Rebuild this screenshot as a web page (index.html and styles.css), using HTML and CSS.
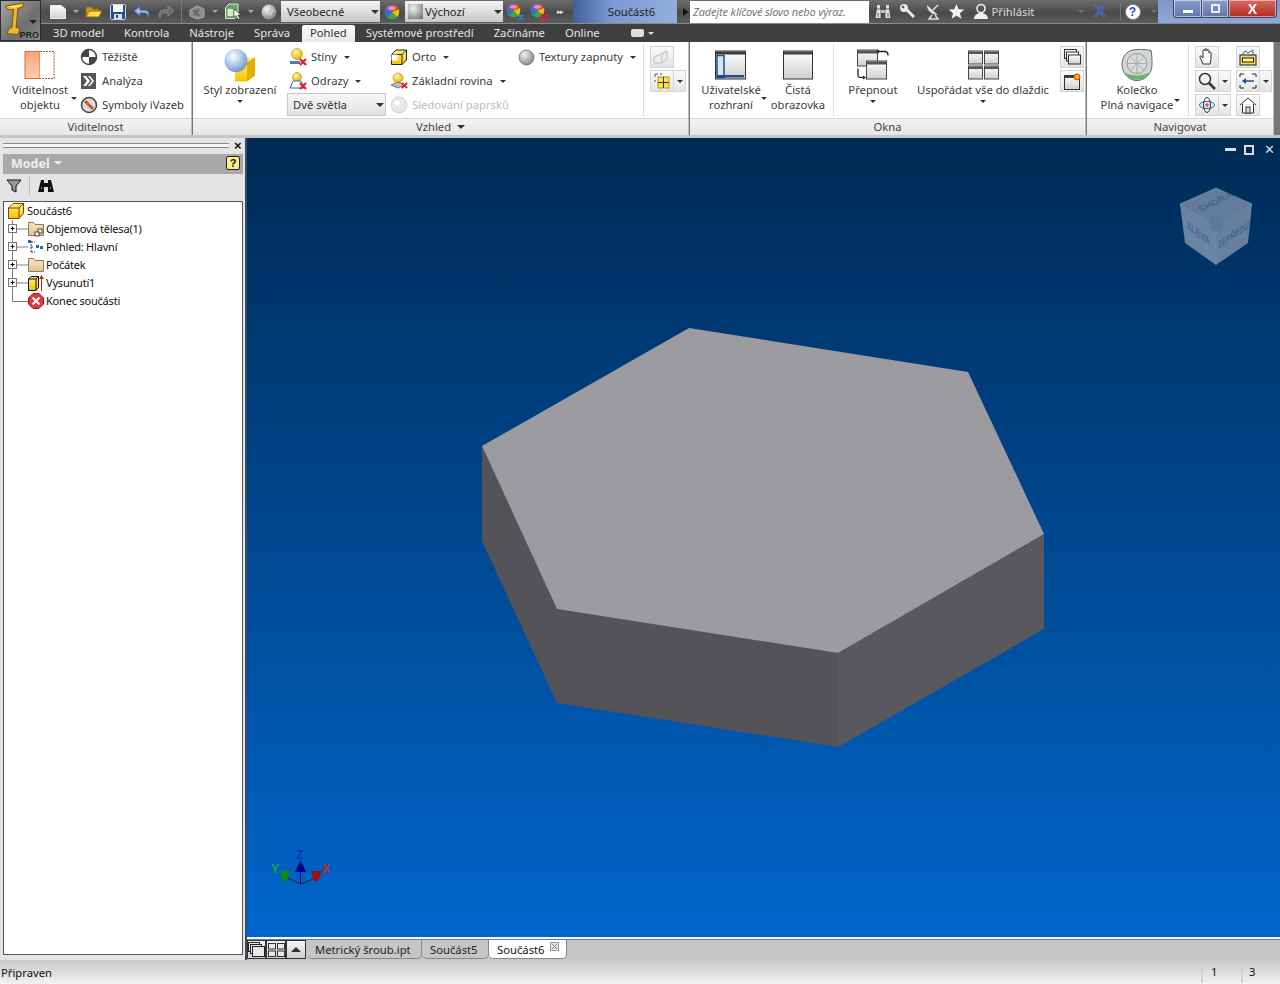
FILE: index.html
```html
<!DOCTYPE html>
<html lang="cs">
<head>
<meta charset="utf-8">
<title>Součást6</title>
<link rel="stylesheet" href="styles.css">
</head>
<body>
<svg class="defs" width="0" height="0" aria-hidden="true">
  <defs>
    <linearGradient id="gold" x1="0" y1="0" x2="0" y2="1"><stop offset="0" stop-color="#fff27a"/><stop offset="1" stop-color="#f4c400"/></linearGradient>
    <radialGradient id="ball" cx=".38" cy=".32" r=".75"><stop offset="0" stop-color="#ffffff"/><stop offset=".55" stop-color="#a9c2e4"/><stop offset="1" stop-color="#6f8fbd"/></radialGradient>
    <radialGradient id="goldball" cx=".38" cy=".32" r=".75"><stop offset="0" stop-color="#fff7b0"/><stop offset="1" stop-color="#e4ad00"/></radialGradient>
    <radialGradient id="greyball" cx=".35" cy=".3" r=".8"><stop offset="0" stop-color="#f2f2f2"/><stop offset="1" stop-color="#7c7c7c"/></radialGradient>
    <linearGradient id="orange" x1="0" y1="0" x2="0" y2="1"><stop offset="0" stop-color="#f4a678"/><stop offset="1" stop-color="#fbd0b0"/></linearGradient>
    <linearGradient id="pane" x1="0" y1="0" x2="0" y2="1"><stop offset="0" stop-color="#ffffff"/><stop offset="1" stop-color="#cfcfcf"/></linearGradient>
    <linearGradient id="folder" x1="0" y1="0" x2="0" y2="1"><stop offset="0" stop-color="#f7e4bf"/><stop offset="1" stop-color="#e2c48f"/></linearGradient>
    <symbol id="wheel" viewBox="0 0 16 16"><circle cx="8" cy="8" r="7.500" fill="#777"/><path d="M8 8V1a7 7 0 0 1 6.600 4.600z" fill="#e63b2e"/><path d="M8 8l6.600-2.400A7 7 0 0 1 13 13z" fill="#f2c200"/><path d="M8 8l5 5a7 7 0 0 1-9.500.4z" fill="#39a845"/><path d="M8 8l-4.500 5.400A7 7 0 0 1 1.200 6z" fill="#2f6fd0"/><path d="M8 8L1.200 6A7 7 0 0 1 8 1z" fill="#8a4fc0"/><ellipse cx="8" cy="4" rx="4" ry="2" fill="#fff" opacity=".45"/></symbol>
    <symbol id="xred" viewBox="0 0 8 8"><path d="M1 1l6 6M7 1L1 7" stroke="#d8202a" stroke-width="2.200"/></symbol>
    <symbol id="node" viewBox="0 0 24 18"><path d="M8.500 0V18M8.500 9H24" stroke="#808080" fill="none"/><rect x="4.500" y="4.500" width="8" height="8" fill="#fff" stroke="#777"/><path d="M6.500 8.500h4M8.500 6.500v4" stroke="#000"/></symbol>
    <symbol id="nodelast" viewBox="0 0 24 18"><path d="M8.500 0V9.500H24" stroke="#808080" fill="none"/></symbol>
  </defs>
</svg>

<div class="app">
  <header class="head">
    <div class="logo"><svg class="logo-i" width="30" height="36" viewBox="0 0 30 36" aria-hidden="true"><path d="M3 5L22 2l-1 4-5 1.500-2 19 4 1-2 6-11-1 2-5 3-1 1.500-18-5 .5z" fill="#eeb92c" stroke="#7a5508"/><path d="M6 5.500L20 3.500 15 6l-4 1z" fill="#ffe68a"/></svg><span class="logo-caret"></span><span class="logo-pro">PRO</span></div>
    <div class="head-rows">
      <div class="qat">
        <span class="q"><svg width="18" height="16" viewBox="0 0 18 16"><path d="M1.500 1.500H12L16.500 5V14.500H1.500z" fill="url(#pane)" stroke="#eee"/></svg></span>
        <span class="qc"></span>
        <span class="q"><svg width="18" height="16" viewBox="0 0 18 16"><path d="M1 13V3h6l1 2h6v2" fill="#c99a1c" stroke="#8a6a10"/><path d="M1 13L4 7h13l-3 6z" fill="#ffd94a" stroke="#8a6a10"/></svg></span>
        <span class="q"><svg width="16" height="16" viewBox="0 0 16 16"><rect x=".5" y=".5" width="15" height="15" rx="1" fill="#25508f" stroke="#c6d4ea"/><rect x="3" y="1" width="10" height="7" fill="#fff"/><rect x="4" y="10" width="8" height="5" fill="#dde"/><rect x="6" y="11" width="2" height="3" fill="#25508f"/></svg></span>
        <span class="q"><svg width="18" height="14" viewBox="0 0 18 14"><path d="M7 1L1 6l6 5V8h4c3 0 4 2 4 5 2-4 1-8-4-8H7z" fill="#9dbbe4" stroke="#3d6ba8"/></svg></span>
        <span class="q"><svg width="18" height="14" viewBox="0 0 18 14"><path d="M11 1l6 5-6 5V8H7c-3 0-4 2-4 5-2-4-1-8 4-8h4z" fill="#6c6c6c" stroke="#8c8c8c"/></svg></span>
        <span class="qsep"></span>
        <span class="q"><svg width="18" height="16" viewBox="0 0 18 16"><path d="M2 6l7-4 7 3v8l-7 2-7-3z" fill="#8d8d8d" stroke="#a8a8a8"/><path d="M5 6l6 6M11 5L6 11" stroke="#666" stroke-width="2"/></svg></span>
        <span class="qc"></span>
        <span class="q"><svg width="18" height="17" viewBox="0 0 18 17"><path d="M1.500 4.500L5 1h9v11l-3 3.500H1.500z" fill="#5fa95f" stroke="#e3e3e3"/><rect x="3.500" y="6" width="6" height="7" fill="#d9e8d2"/><path d="M10 6l7 6h-3l2 4-2 .5-2-4-2 2z" fill="#fff" stroke="#222" stroke-width=".6"/></svg></span>
        <span class="qc"></span>
        <span class="q"><svg width="16" height="16" viewBox="0 0 16 16"><circle cx="8" cy="8" r="7.500" fill="url(#greyball)"/><path d="M4 6h1M8 4h1M11 7h1M6 10h1M9 11h1M5 8h1M10 9h1" stroke="#fff"/></svg></span>
        <div class="combo combo-a"><span>Všeobecné</span><i class="tri"></i></div>
        <span class="qw"><svg width="16" height="16"><use href="#wheel"/></svg></span>
        <div class="combo combo-b"><svg width="15" height="15" viewBox="0 0 15 15"><rect width="15" height="15" fill="url(#greyball)"/></svg><span>Výchozí</span><i class="tri"></i></div>
        <span class="qw2"><svg width="18" height="18" viewBox="0 0 18 18"><use href="#wheel" width="15" height="15"/><path d="M11 12h7l-3.500 3z" fill="#2a8fe0"/><path d="M11 16h7" stroke="#2a8fe0"/></svg></span>
        <span class="qw2"><svg width="18" height="18" viewBox="0 0 18 18"><use href="#wheel" width="15" height="15"/><use href="#xred" x="10" y="10" width="8" height="8"/></svg></span>
        <span class="more">▸▸</span>
        <div class="doc-title">Součást6</div>
        <span class="play"></span>
        <div class="search">Zadejte klíčové slovo nebo výraz.</div>
        <div class="tools">
          <span class="t"><svg width="18" height="16" viewBox="0 0 18 16"><path d="M3 1h3v5H3zM12 1h3v5h-3z" fill="#ddd"/><path d="M2.500 5h4.500v9.500H1zM11 5h4.500l1.500 9.500h-6z" fill="#e5e5e5" stroke="#333" stroke-width=".7"/><rect x="7" y="6" width="4" height="3" fill="#bbb"/><path d="M3 9h2v4H3zM13 9h2v4h-2z" fill="#999"/></svg></span>
          <span class="t"><svg width="17" height="17" viewBox="0 0 17 17"><path d="M6 5l9 9" stroke="#e8e8e8" stroke-width="3"/><circle cx="5" cy="5" r="4" fill="#e8e8e8"/><circle cx="4" cy="4" r="1.300" fill="#555"/></svg></span>
          <span class="t"><svg width="17" height="17" viewBox="0 0 17 17"><path d="M3 2c0 6 5 10 11 10z" fill="#e0e0e0"/><path d="M9 7l5-5M8 12l-3 4h9l-3-4" stroke="#e0e0e0" fill="none" stroke-width="1.500"/></svg></span>
          <span class="t"><svg width="17" height="17" viewBox="0 0 17 17"><path d="M8.500 1l2.200 5.200 5.600.4-4.300 3.600 1.400 5.500-4.900-3-4.900 3 1.400-5.500L.7 6.600l5.600-.4z" fill="#f0f0f0"/></svg></span>
          <span class="t"><svg width="18" height="17" viewBox="0 0 18 17"><circle cx="9" cy="5.500" r="4" fill="none" stroke="#eee" stroke-width="1.600"/><path d="M2 16c0-4 3-5 5-6h4c2 1 5 2 5 6z" fill="#eee"/></svg></span>
          <span class="login">Přihlásit</span>
          <i class="tri tri-d"></i>
          <span class="xx">X</span>
          <span class="tsep"></span>
          <span class="help">?</span>
          <i class="tri tri-d"></i>
        </div>
        <div class="winctl">
          <div class="wc wc-min"><span></span></div>
          <div class="wc wc-max"><span></span></div>
          <div class="wc wc-x">X</div>
        </div>
      </div>
      <nav class="tabs">
        <span class="tab">3D model</span>
        <span class="tab">Kontrola</span>
        <span class="tab">Nástroje</span>
        <span class="tab">Správa</span>
        <span class="tab tab-on">Pohled</span>
        <span class="tab">Systémové prostředí</span>
        <span class="tab">Začínáme</span>
        <span class="tab">Online</span>
        <span class="tab-cam"><i></i><b class="tri tri-w"></b></span>
      </nav>
    </div>
  </header>

  <section class="ribbon">
    <div class="panel p1">
      <div class="pbody">
        <div class="big b-vid">
          <svg class="bico" width="32" height="30" viewBox="0 0 32 30"><rect x="1" y="1" width="15" height="27" fill="url(#orange)" stroke="#e06a28"/><path d="M16 1h14v27H16" fill="#fff" stroke="#a0532a" stroke-dasharray="2 1"/></svg>
          <span class="blabel">Viditelnost<br>objektu</span><i class="tri side side-vid"></i>
        </div>
        <div class="col c-vid">
          <div class="sr"><svg width="18" height="18" viewBox="0 0 18 18"><circle cx="9" cy="9" r="7.500" fill="#fff" stroke="#444" stroke-width="1.500"/><path d="M9 9V1.500A7.500 7.500 0 0 0 1.500 9zM9 9v7.500A7.500 7.500 0 0 0 16.500 9z" fill="#444"/></svg><span>Těžiště</span></div>
          <div class="sr"><svg width="18" height="18" viewBox="0 0 18 18"><rect x="1" y="1" width="15" height="16" fill="#555"/><path d="M3 4h3l4 5-4 5H3l4-5zM8 4h2l4 5-4 5H8l4-5z" fill="#fff"/></svg><span>Analýza</span></div>
          <div class="sr"><svg width="18" height="18" viewBox="0 0 18 18"><circle cx="9" cy="9" r="7.500" fill="#ddd" stroke="#444" stroke-width="1.500"/><path d="M5 5l8 8" stroke="#d5502a" stroke-width="3"/></svg><span>Symboly iVazeb</span></div>
        </div>
      </div>
      <div class="pfoot">Viditelnost</div>
    </div>

    <div class="panel p2">
      <div class="pbody">
        <div class="big b-styl">
          <svg class="bico" width="34" height="34" viewBox="0 0 34 34"><path d="M12 14l10-5h10v18l-8 6H12z" fill="url(#gold)"/><path d="M24 14l8-5v18l-8 6z" fill="#e0ad00"/><circle cx="13" cy="12" r="11.500" fill="url(#ball)"/></svg>
          <span class="blabel">Styl zobrazení</span><i class="tri under"></i>
        </div>
        <div class="col c-sti">
          <div class="sr"><svg width="18" height="18" viewBox="0 0 18 18"><circle cx="8" cy="6" r="5.500" fill="url(#goldball)" stroke="#b98a00" stroke-width=".6"/><path d="M1 13h10v3H1z" fill="#5578a8"/><use href="#xred" x="10" y="10" width="8" height="8"/></svg><span>Stíny</span><i class="tri tri-s"></i></div>
          <div class="sr"><svg width="18" height="18" viewBox="0 0 18 18"><circle cx="8" cy="5" r="4.500" fill="url(#goldball)" stroke="#b98a00" stroke-width=".6"/><path d="M4 9h8l3 7H1z" fill="#fff" stroke="#466a9a"/><use href="#xred" x="10" y="10" width="8" height="8"/></svg><span>Odrazy</span><i class="tri tri-s"></i></div>
          <div class="lightbox"><span>Dvě světla</span><i class="tri"></i></div>
        </div>
        <div class="col c-ort">
          <div class="sr"><svg width="18" height="18" viewBox="0 0 18 18"><path d="M1.500 6.500L6 2h10.500v10L12 16.500H1.500z" fill="url(#gold)" stroke="#222"/><path d="M1.500 6.500H12v10M12 6.500L16.500 2" fill="none" stroke="#222"/><rect x="1.500" y="6.500" width="6" height="6" fill="#fff"/></svg><span>Orto</span><i class="tri tri-s"></i></div>
          <div class="sr"><svg width="18" height="18" viewBox="0 0 18 18"><circle cx="8" cy="6" r="5" fill="url(#goldball)" stroke="#b98a00" stroke-width=".6"/><path d="M1 13l7-3 7 3-7 3z" fill="#bbb" stroke="#777"/><use href="#xred" x="11" y="10" width="7" height="7"/></svg><span>Základní rovina</span><i class="tri tri-s"></i></div>
          <div class="sr sr-off"><svg width="18" height="18" viewBox="0 0 18 18"><circle cx="9" cy="9" r="8" fill="#e8e8e8" stroke="#d2d2d2"/><circle cx="7" cy="7" r="3" fill="#fbfbfb"/></svg><span>Sledování paprsků</span></div>
        </div>
        <div class="col c-tex">
          <div class="sr"><svg width="17" height="17" viewBox="0 0 17 17"><circle cx="8.500" cy="8.500" r="7.500" fill="url(#greyball)" stroke="#666" stroke-width=".7"/></svg><span>Textury zapnuty</span><i class="tri tri-s"></i></div>
        </div>
        <div class="psep psep-v"></div>
        <div class="col c-mini">
          <div class="ibtn off"><svg width="18" height="16" viewBox="0 0 18 16"><path d="M1 8l5-2 8-4v8l-5 4H1z" fill="#ececec" stroke="#bcbcbc"/><path d="M9 14V6l5-4" fill="none" stroke="#bcbcbc"/></svg></div>
          <div class="ibtn split"><span class="ib-main"><svg width="16" height="16" viewBox="0 0 16 16"><rect x="4" y="4" width="11" height="11" fill="#ffe14a" stroke="#c39b00"/><path d="M9.500 4v11M4 9.500h11" stroke="#333"/><path d="M1 4V1h3M1 7v2M6 1h2" stroke="#1c62c8" fill="none"/></svg></span><span class="ib-arr"><i class="tri tri-k"></i></span></div>
        </div>
      </div>
      <div class="pfoot">Vzhled <i class="tri tri-foot"></i></div>
    </div>

    <div class="panel p3">
      <div class="pbody">
        <div class="big b-uziv">
          <svg class="bico" width="32" height="30" viewBox="0 0 32 30"><rect x=".5" y=".5" width="30" height="28" fill="url(#pane)" stroke="#333"/><rect x="1" y="1" width="29" height="3" fill="#3a3a3a"/><rect x="2" y="5" width="7" height="22" fill="#d8e6f4" stroke="#1c4f86" stroke-width="1.500"/><rect x="2" y="24.500" width="27" height="2.500" fill="#1c4f86"/></svg>
          <span class="blabel">Uživatelské<br>rozhraní</span><i class="tri side side-uziv"></i>
        </div>
        <div class="big b-cist">
          <svg class="bico" width="30" height="30" viewBox="0 0 30 30"><rect x=".5" y=".5" width="29" height="28" fill="url(#pane)" stroke="#333"/><rect x="1" y="1" width="28" height="3" fill="#444"/></svg>
          <span class="blabel">Čistá<br>obrazovka</span>
        </div>
        <div class="psep psep-o"></div>
        <div class="big b-prep">
          <svg class="bico" width="32" height="32" viewBox="0 0 32 32"><rect x=".5" y=".5" width="20" height="16" fill="url(#pane)" stroke="#444"/><rect x="1" y="1" width="19" height="3" fill="#555"/><rect x="9.500" y="11.500" width="20" height="18" fill="url(#pane)" stroke="#444"/><rect x="10" y="12" width="19" height="3" fill="#555"/><path d="M22 2h6c2 0 3 1 3 4M1 19v7c0 2 1 2 5 2" fill="none" stroke="#222" stroke-width="1.300"/><path d="M22 0v4l-3-2zM6 26v4l3-2z" fill="#222"/></svg>
          <span class="blabel">Přepnout</span><i class="tri under"></i>
        </div>
        <div class="big b-uspo">
          <svg class="bico" width="31" height="30" viewBox="0 0 31 30"><g fill="url(#pane)" stroke="#444"><rect x=".5" y=".5" width="14" height="13"/><rect x="16.500" y=".5" width="14" height="13"/><rect x=".5" y="15.500" width="14" height="13"/><rect x="16.500" y="15.500" width="14" height="13"/></g><g fill="#555"><rect x="1" y="1" width="13" height="2.500"/><rect x="17" y="1" width="13" height="2.500"/><rect x="1" y="16" width="13" height="2.500"/><rect x="17" y="16" width="13" height="2.500"/></g></svg>
          <span class="blabel">Uspořádat vše do dlaždic</span><i class="tri under"></i>
        </div>
        <div class="col c-mini c-okna">
          <div class="ibtn"><svg width="17" height="16" viewBox="0 0 17 16"><g fill="url(#pane)" stroke="#333"><rect x=".5" y=".5" width="12" height="9"/><rect x="2.500" y="3" width="12" height="9"/><rect x="4.500" y="6" width="12" height="9"/></g></svg></div>
          <div class="ibtn"><svg width="17" height="17" viewBox="0 0 17 17"><rect x=".5" y="2.500" width="15" height="14" fill="url(#pane)" stroke="#333"/><rect x="1" y="3" width="14" height="2" fill="#444"/><circle cx="13" cy="4" r="3" fill="#f7b500" stroke="#e23b10"/></svg></div>
        </div>
      </div>
      <div class="pfoot">Okna</div>
    </div>

    <div class="panel p4">
      <div class="pbody">
        <div class="big b-kol">
          <svg class="bico" width="32" height="34" viewBox="0 0 32 34"><path d="M16 1c5 0 9 0 14 1 1 5 1 9 1 14 0 9-7 16-15 16S1 25 1 16 7 1 16 1z" fill="#d0d8d0" stroke="#666"/><circle cx="16" cy="15" r="10" fill="#d8dcdc" stroke="#999"/><path d="M16 5v20M6 15h20M9 8l14 14M23 8L9 22" stroke="#aaa"/><path d="M4 24c6 4 18 4 24 0l-3 5c-5 3-13 3-18 0z" fill="#66b56c"/></svg>
          <span class="blabel">Kolečko<br>Plná navigace</span><i class="tri side side-kol"></i>
        </div>
        <div class="psep psep-n"></div>
        <div class="col c-nav1">
          <div class="ibtn"><svg width="18" height="18" viewBox="0 0 18 18"><path d="M5 16L2 9c0-2 2-1 3 1V3c0-2 2-2 2 0V2c0-2 2-2 2 0v1c0-2 2-2 2 0v2c0-2 2-1 2 0v6l-1 5z" fill="#fff" stroke="#333"/></svg></div>
          <div class="ibtn split"><span class="ib-main"><svg width="18" height="18" viewBox="0 0 18 18"><circle cx="7" cy="7" r="5.500" fill="#f4f4f4" stroke="#333" stroke-width="1.500"/><path d="M11 11l6 6" stroke="#333" stroke-width="2.500"/></svg></span><span class="ib-arr"><i class="tri tri-k"></i></span></div>
          <div class="ibtn split"><span class="ib-main"><svg width="18" height="18" viewBox="0 0 18 18"><ellipse cx="9" cy="9" rx="7.500" ry="3.500" fill="none" stroke="#1c62c8"/><ellipse cx="9" cy="9" rx="3.500" ry="7.500" fill="none" stroke="#333"/><path d="M7 9h4M9 7v4" stroke="#e01c1c"/></svg></span><span class="ib-arr"><i class="tri tri-k"></i></span></div>
        </div>
        <div class="col c-nav2">
          <div class="ibtn"><svg width="18" height="17" viewBox="0 0 18 17"><rect x="1" y="6" width="16" height="10" fill="#ffd93a" stroke="#1d1d1d"/><rect x="3.500" y="9" width="11" height="4" fill="#fff3b0" stroke="#1d1d1d"/><path d="M3 6l3-4 3 2 5-3v5" fill="none" stroke="#1c62c8"/></svg></div>
          <div class="ibtn split"><span class="ib-main"><svg width="18" height="16" viewBox="0 0 18 16"><path d="M1 4V1h4M13 1h4v3M1 12v3h4M13 15h4v-3" fill="none" stroke="#222"/><path d="M15 8H5" stroke="#1c4f86" stroke-width="1.500"/><path d="M7 5L3 8l4 3z" fill="#1c4f86"/></svg></span><span class="ib-arr"><i class="tri tri-k"></i></span></div>
          <div class="ibtn"><svg width="18" height="18" viewBox="0 0 18 18"><path d="M1 9l8-7 8 7M3.500 8v9h11V8" fill="#fff" stroke="#333"/><rect x="7" y="11" width="4" height="6" fill="#ddd" stroke="#333"/></svg></div>
        </div>
      </div>
      <div class="pfoot">Navigovat</div>
    </div>
  </section>

  <main class="main">
    <aside class="browser">
      <div class="grip"><span class="grip-line"></span><span class="grip-x">×</span></div>
      <div class="bhead"><span class="bhead-t">Model</span><i class="tri tri-wh"></i><span class="bhelp">?</span></div>
      <div class="btools">
        <svg width="16" height="14" viewBox="0 0 16 14"><path d="M1 1h14L10 7v6L6 11V7z" fill="#9a9a9a" stroke="#111"/></svg>
        <span class="btsep"></span>
        <svg width="16" height="14" viewBox="0 0 16 14"><path d="M3 1h3v12H0zM10 1h3l3 12h-6z" fill="#111"/><rect x="6" y="4" width="4" height="4" fill="#111"/><path d="M3 9h1M12 9h1" stroke="#fff"/></svg>
      </div>
      <div class="tree">
        <div class="row row-root"><svg width="16" height="16" viewBox="0 0 16 16"><path d="M.5 5L5 .5h10.500v10L11 15.500H.5z" fill="url(#gold)" stroke="#8a3b10"/><path d="M.5 5H11v10.500M11 5l4.500-4.500" fill="none" stroke="#8a3b10"/></svg><span>Součást6</span></div>
        <div class="row"><svg class="cn" width="24" height="18"><use href="#node"/></svg><svg width="16" height="16" viewBox="0 0 16 16"><path d="M.5 14.500V1.500h5l1.500 2h8.500v11z" fill="url(#folder)" stroke="#8c7a5a"/><rect x="10" y="8" width="4" height="4" fill="#fff" stroke="#444"/><rect x="7" y="11" width="4" height="4" fill="#fff" stroke="#444"/></svg><span>Objemová tělesa(1)</span></div>
        <div class="row"><svg class="cn" width="24" height="18"><use href="#node"/></svg><svg width="16" height="16" viewBox="0 0 16 16"><path d="M3 2v12M3 3h4M3 8h3M3 13h4M9 8h6" stroke="#333" fill="none" stroke-dasharray="2 1"/><rect x="0" y="1" width="3" height="3" fill="#2c6aa8"/><rect x="8" y="6" width="3" height="3" fill="#2c6aa8"/><rect x="12" y="7" width="3" height="3" fill="#2c6aa8"/></svg><span>Pohled: Hlavní</span></div>
        <div class="row"><svg class="cn" width="24" height="18"><use href="#node"/></svg><svg width="16" height="16" viewBox="0 0 16 16"><path d="M.5 14.500V1.500h5l1.500 2h8.500v11z" fill="url(#folder)" stroke="#8c7a5a"/></svg><span>Počátek</span></div>
        <div class="row"><svg class="cn" width="24" height="18"><use href="#node"/></svg><svg width="16" height="16" viewBox="0 0 16 16"><path d="M.5 4L3 1.500h7.500v11L8 15.500H.5z" fill="url(#gold)" stroke="#111"/><path d="M.5 4H8v11.500M8 4l2.500-2.500" fill="none" stroke="#111"/><path d="M13.500 16V3" stroke="#e01010"/><path d="M13.500 0l2.500 4h-5z" fill="#e01010"/></svg><span>Vysunutí1</span></div>
        <div class="row"><svg class="cn" width="24" height="18"><use href="#nodelast"/></svg><svg width="16" height="16" viewBox="0 0 16 16"><path d="M5 .5h6L15.500 5v6L11 15.500H5L.5 11V5z" fill="#e8343a" stroke="#8c2020"/><path d="M4.500 4.500l7 7M11.500 4.500l-7 7" stroke="#fff" stroke-width="2.200"/></svg><span>Konec součásti</span></div>
      </div>
    </aside>

    <div class="work">
      <div class="viewport">
        <div class="vp-ctl">
          <span class="vc-min"></span>
          <span class="vc-max"></span>
          <span class="vc-x">✕</span>
        </div>
        <svg class="model" width="1033" height="799" viewBox="247 138 1033 799">
          <polygon points="482,446 557,609 557,703 482,541" fill="#545358"/>
          <polygon points="557,609 838,653 838,747 557,703" fill="#545358"/>
          <polygon points="838,653 1044,534 1044,629 838,747" fill="#59585d"/>
          <polygon points="689,328 968,372 1044,534 838,653 557,609 482,446" fill="#9c9b9f"/>
          <g class="cube">
            <polygon points="1216,188 1252,204 1216,226 1180,204" fill="#637c9c"/>
            <polygon points="1180,204 1216,226 1216,265 1185,243" fill="#6a83a2"/>
            <polygon points="1252,204 1216,226 1216,265 1248,243" fill="#6880a0"/>
            <path d="M1180 204L1216 188 1252 204 1216 226zM1216 226V265" fill="none" stroke="#7f8b9c" stroke-width=".7"/>
            <polygon points="1209,219 1216,216 1223,220 1222,229 1215,232 1209,228" fill="#5d7899"/>
            <text class="cube-t" transform="matrix(.88 -.42 .62 .62 1201 212)">SHORA</text>
            <text class="cube-t" transform="matrix(.68 .52 0 1.050 1187 228)">ZLEVA</text>
            <text class="cube-t" transform="matrix(.62 -.42 0 1.050 1218 249)">ZEPŘEDU</text>
          </g>
          <g class="triad">
            <path d="M301 884l-20-9M301 884l19-8" stroke="#222" fill="none"/>
            <path d="M300.500 884v-14" stroke="#00008a"/>
            <polygon points="300.500,860 306,872 295,872" fill="#00008a"/>
            <polygon points="279,871 290,871 287,881 283,881" fill="#0a8a12"/>
            <polygon points="311,871 322,871 318,881 314,881" fill="#9c0f14"/>
            <text x="296" y="859" class="t-z">Z</text>
            <text x="271" y="873" class="t-y">Y</text>
            <text x="322" y="873" class="t-x">X</text>
          </g>
        </svg>
      </div>
      <div class="doctabs">
        <span class="dbtn"><svg width="17" height="15" viewBox="0 0 17 15"><g fill="#e8e8e8" stroke="#222"><rect x=".5" y=".5" width="11" height="9"/><rect x="2.500" y="2.500" width="11" height="9"/><rect x="4.500" y="4.500" width="12" height="10"/></g></svg></span>
        <span class="dbtn"><svg width="17" height="14" viewBox="0 0 17 14"><g fill="#e8e8e8" stroke="#333"><rect x=".5" y=".5" width="7" height="5.500"/><rect x="9.500" y=".5" width="7" height="5.500"/><rect x=".5" y="8" width="7" height="5.500"/><rect x="9.500" y="8" width="7" height="5.500"/></g></svg></span>
        <span class="dbtn dbtn-up"><i></i></span>
        <span class="dtab d1">Metrický šroub.ipt</span>
        <span class="dtab d2">Součást5</span>
        <span class="dtab d3">Součást6<svg width="9" height="9" viewBox="0 0 9 9"><rect x=".5" y=".5" width="8" height="8" fill="#e4e4e4" stroke="#999"/><path d="M2 2l5 5M7 2L2 7" stroke="#888"/></svg></span>
      </div>
    </div>
  </main>

  <footer class="status">
    <span class="st-text">Připraven</span>
    <span class="st-cell st-1">1</span>
    <span class="st-cell st-2">3</span>
  </footer>
</div>
</body>
</html>
```

FILE: styles.css
```css
* { box-sizing: border-box; }
html, body { margin: 0; padding: 0; }
body { width: 1280px; height: 984px; overflow: hidden; background: #444; font-family: "Noto Sans", "Open Sans", sans-serif; font-size: 11.25px; color: #3c3c3c; }
.defs { position: absolute; }
svg { display: block; flex: none; }
i { display: block; font-style: normal; }

.app { width: 1280px; height: 984px; display: flex; flex-direction: column; }

/* carets */
.tri { width: 0; height: 0; border-left: 4px solid transparent; border-right: 4px solid transparent; border-top: 4px solid #333; flex: none; }
.tri-s { border-left-width: 3px; border-right-width: 3px; border-top-width: 3px; margin-left: 3px; }
.tri-k { border-left-width: 3px; border-right-width: 3px; border-top-width: 3px; }
.tri-d { border-left-width: 3px; border-right-width: 3px; border-top-width: 3px; border-top-color: #777; }
.tri-w { border-left-width: 3px; border-right-width: 3px; border-top-width: 3px; border-top-color: #ddd; }
.tri-wh { border-top-color: #eee; margin-left: 4px; }
.tri-foot { margin-left: 6px; }

/* header */
.head { display: flex; height: 42px; flex: none; }
.logo { width: 41px; height: 41px; position: relative; background: linear-gradient(135deg, #a8a8a8, #6e6e6e 60%, #8a8a8a); border: 1px solid #2c2c2c; }
.logo-i { position: absolute; left: 1px; top: 0; }
.logo-caret { position: absolute; right: 3px; top: 19px; border-left: 4px solid transparent; border-right: 4px solid transparent; border-top: 4px solid #222; }
.logo-pro { position: absolute; right: 1px; bottom: 0; font: bold 9px "Liberation Sans", sans-serif; color: #222; }
.head-rows { width: 1239px; display: flex; flex-direction: column; }
.qat { height: 24px; display: flex; align-items: center; background: linear-gradient(#6d6d6d, #4a4a4a 55%, #5c5c5c); border-bottom: 1px solid #8a8a8a; }
.q { width: 24px; height: 23px; display: flex; align-items: center; justify-content: center; flex: none; }
.qc { width: 12px; flex: none; display: flex; justify-content: center; }
.qc::after { content: ""; border-left: 3px solid transparent; border-right: 3px solid transparent; border-top: 3px solid #aaa; }
.qat > .q:first-child { margin-left: 5px; }
.qsep { width: 7px; height: 23px; flex: none; position: relative; }
.qsep::after { content: ""; position: absolute; left: 3px; top: 0; bottom: 0; width: 1px; background: #7a7a7a; }
.combo { height: 21px; display: flex; align-items: center; background: linear-gradient(#f4f4f4, #c8c8c8); color: #222; flex: none; }
.combo .tri { margin-left: auto; margin-right: 1px; }
.combo-a { width: 99px; padding-left: 6px; }
.combo-b { width: 98px; padding-left: 3px; gap: 2px; margin-left: 1px; }
.qw { width: 24px; display: flex; justify-content: center; flex: none; }
.qw2 { width: 24px; display: flex; justify-content: center; flex: none; }
.more { width: 10px; color: #eee; font-size: 7px; letter-spacing: -1px; margin-left: 6px; flex: none; }
.doc-title { width: 104px; height: 23px; margin-left: 6px; text-align: center; line-height: 23px; color: #222; flex: none; padding-left: 13px; background: linear-gradient(90deg, #3f5d9a, #7a98d0 35%, #93aede); }
.play { width: 0; height: 0; margin: 0 2px 0 6px; border-top: 4px solid transparent; border-bottom: 4px solid transparent; border-left: 5px solid #111; flex: none; }
.search { width: 179px; height: 22px; line-height: 22px; background: #fff; color: #777; font-style: italic; font-size: 11px; padding-left: 3px; white-space: nowrap; overflow: hidden; flex: none; letter-spacing: -.15px; }
.tools { width: 289px; height: 23px; display: flex; align-items: center; padding-left: 2px; flex: none; }
.t { width: 24.5px; display: flex; justify-content: center; flex: none; }
.login { color: #ddd; margin-left: -2px; width: 86px; }
.xx { color: #3a5fa8; font: bold 17px "Liberation Sans", sans-serif; margin-left: 11px; width: 18px; text-shadow: 0 0 1px #9ab; }
.tsep { width: 1px; height: 17px; background: #777; margin: 0 7px; }
.help { width: 16px; height: 16px; border-radius: 50%; background: #fff; color: #1f4ea8; text-align: center; font: bold 12px/15px "Liberation Sans", sans-serif; border: 1px solid #888; margin-left: -3px; margin-right: 10px; }
.winctl { flex: 1; height: 23px; align-self: flex-start; background: linear-gradient(#7e96c8, #8ea6d8); padding-left: 15px; padding-right: 3px; display: flex; }
.wc { height: 18px; border: 1px solid #3a4868; border-top: none; display: flex; align-items: center; justify-content: center; box-shadow: 0 0 0 1px rgba(255,255,255,.5) inset; }
.wc-min { width: 29px; background: linear-gradient(#8a9dc8, #5f76a8); border-radius: 0 0 0 4px; }
.wc-min span { width: 10px; height: 3px; background: #fff; margin-top: 5px; }
.wc-max { width: 27px; background: linear-gradient(#8a9dc8, #5f76a8); border-left: none; }
.wc-max span { width: 9px; height: 9px; border: 2px solid #eef; }
.wc-x { width: 48px; background: linear-gradient(#d86a60, #b42a20); color: #fff; font: bold 14px/16px "Liberation Sans", sans-serif; border-left: none; border-radius: 0 0 4px 0; }

.tabs { height: 18px; display: flex; align-items: flex-end; background: #3f3f3f; padding-left: 2px; }
.tab { height: 18px; line-height: 17px; padding: 0 10px; color: #e6e6e6; white-space: nowrap; flex: none; }
.tab-on { height: 17px; background: linear-gradient(#fbfbfb, #e9e9e9); color: #333; border-radius: 2px 2px 0 0; margin: 0 1px 0 2px; padding: 0 8px; line-height: 16px; }
.tab-cam { margin-left: 21px; height: 18px; display: flex; align-items: center; gap: 4px; }
.tab-cam i { width: 13px; height: 8px; background: #ddd; border-radius: 2px; }

/* ribbon */
.ribbon { height: 96px; display: flex; flex: none; background: #777; border-bottom: 3px solid #c4c4c4; gap: 1px; padding-right: 5px; }
.panel { display: flex; flex-direction: column; flex: none; background: #fff; border-right: 1px solid #bdbdbd; }
.p1 { width: 192px; }
.p2 { width: 496px; }
.p3 { width: 396px; }
.p4 { width: 187px; }
.pbody { height: 76px; display: flex; flex: none; position: relative; }
.pfoot { flex: 1; display: flex; align-items: center; justify-content: center; background: linear-gradient(#f2f2f2, #e6e6e6); border-top: 1px solid #d8d8d8; line-height: 16px; color: #444; }

.big { display: flex; flex-direction: column; align-items: center; flex: none; position: relative; padding-top: 6px; }
.bico { height: 35px; }
.blabel { text-align: center; line-height: 15px; white-space: nowrap; margin-top: -1px; }
.under { margin-top: 3px; border-left-width: 3px; border-right-width: 3px; border-top-width: 3px; }
.side { position: absolute; border-left-width: 3px; border-right-width: 3px; border-top-width: 3px; }
.b-vid { width: 76px; margin-left: 2px; }
.side-vid { right: 1px; top: 55px; }
.col { display: flex; flex-direction: column; flex: none; padding-top: 3px; }
.sr { height: 24px; display: flex; align-items: center; gap: 4px; white-space: nowrap; }
.sr span { margin-top: -2px; }
.sr-off { color: #bcbcbc; }
.c-vid { margin-left: 2px; width: 112px; }
.b-styl { width: 80px; margin-left: 7px; }
.c-sti { margin-left: 9px; width: 99px; }
.c-ort { margin-left: 2px; width: 128px; }
.c-tex { width: 125px; }
.lightbox { width: 99px; height: 23px; margin-left: -2px; border: 1px solid #c8c8c8; background: linear-gradient(#f6f6f6, #e2e2e2); display: flex; align-items: center; padding-left: 5px; color: #333; }
.lightbox .tri { margin-left: auto; margin-right: 1px; }
.psep { width: 1px; background: #dcdcdc; height: 72px; margin-top: 2px; flex: none; }
.c-mini { margin-left: 6px; padding-top: 4px; gap: 2px; }
.ibtn { width: 24px; height: 22px; border: 1px solid #d4d4d4; background: linear-gradient(#fafafa, #e4e4e4); display: flex; align-items: center; justify-content: center; flex: none; }
.ibtn.off svg { opacity: .9; }
.ibtn.split { width: 36px; padding: 0; align-items: stretch; }
.ib-main { width: 23px; display: flex; align-items: center; justify-content: center; border-right: 1px solid #d4d4d4; }
.ib-arr { flex: 1; display: flex; align-items: center; justify-content: center; }

.b-uziv { width: 58px; margin-left: 12px; }
.side-uziv { right: -7px; top: 55px; }
.b-cist { width: 54px; margin-left: 11px; }
.psep-o { margin-left: 8px; }
.b-prep { width: 56px; margin-left: 11px; }
.b-uspo { width: 134px; margin-left: 15px; }
.c-okna { margin-left: 10px; }
.b-kol { width: 78px; margin-left: 11px; }
.side-kol { right: -4px; top: 57px; }
.psep-n { margin-left: 12px; }
.c-nav1 { margin-left: 6px; width: 41px; padding-top: 4px; gap: 2px; }
.c-nav2 { padding-top: 4px; gap: 2px; }

/* main */
.main { flex: 1; display: flex; min-height: 0; background: #d4d4d4; }
.browser { width: 245px; flex: none; display: flex; flex-direction: column; background: #e4e4e4; padding: 0 2px 5px 3px; }
.grip { height: 16px; display: flex; align-items: center; flex: none; padding-bottom: 2px; }
.grip-line { width: 226px; height: 5px; border-top: 1px solid #888; border-bottom: 1px solid #888; background: #f5f5f5; }
.grip-x { margin-left: 5px; color: #111; font: bold 13px/13px "Liberation Sans", sans-serif; }
.bhead { height: 20px; flex: none; background: #a8a8a8; display: flex; align-items: center; padding-left: 8px; padding-bottom: 2px; position: relative; }
.bhead-t { color: #eee; font-weight: 700; font-size: 12.500px; }
.bhelp { position: absolute; right: 3px; top: 2px; width: 14px; height: 14px; background: #ffef8a; border: 1px solid #222; border-radius: 2px; color: #111; font: bold 11px/12px "Liberation Sans", sans-serif; text-align: center; }
.btools { height: 27px; flex: none; display: flex; align-items: center; padding-left: 3px; padding-bottom: 3px; }
.btsep { width: 1px; height: 18px; background: #bbb; margin: 0 8px 0 7px; }
.tree { flex: 1; background: #fff; border: 1px solid #555; color: #111; font-size: 11px; letter-spacing: -.2px; }
.row { height: 18px; display: flex; align-items: center; white-space: nowrap; }
.row span { margin-left: 2px; margin-top: -2px; }
.row-root { padding-left: 4px; }
.row-root span { margin-left: 3px; }

.work { flex: 1; display: flex; flex-direction: column; min-width: 0; border-left: 2px solid #3c4c60; }
.viewport { height: 799px; flex: none; position: relative; background: linear-gradient(#002a55, #0066cc); overflow: hidden; }
.model { position: absolute; left: 0; top: 0; }
.vp-ctl { position: absolute; right: 3px; top: 5px; width: 52px; height: 13px; display: flex; align-items: center; z-index: 1; color: #ddd; }
.vc-min { width: 11px; height: 3px; background: #ddd; }
.vc-max { width: 10px; height: 10px; border: 2px solid #ddd; margin-left: 8px; }
.vc-x { margin-left: 10px; font: bold 13px "DejaVu Sans", sans-serif; }
.cube-t { font: 700 10px "Liberation Sans", sans-serif; fill: #4a6282; letter-spacing: .3px; }
.t-z { font: bold 12px "Liberation Sans", sans-serif; fill: #0b2fb5; }
.t-y { font: bold 12px "Liberation Sans", sans-serif; fill: #17a83a; }
.t-x { font: bold 12px "Liberation Sans", sans-serif; fill: #c0242f; }

.doctabs { flex: 1; display: flex; align-items: flex-start; background: #c6c6c6; border-top: 2px solid #f4f4f4; box-shadow: inset 0 1px 0 #7b7b7b; padding-top: 1px; position: relative; }
.dbtn { width: 20px; height: 19px; display: flex; align-items: center; justify-content: center; background: linear-gradient(#f4f4f4, #cfcfcf); border: 1px solid #333; flex: none; }
.dbtn:first-child { width: 19px; }
.dbtn-up i { width: 0; height: 0; border-left: 5px solid transparent; border-right: 5px solid transparent; border-bottom: 5px solid #333; }
.dtab { height: 19px; line-height: 17px; padding: 0 8px; color: #222; border-right: 1px solid #888; border-bottom: 1px solid #888; border-radius: 0 0 5px 5px; white-space: nowrap; display: flex; align-items: center; flex: none; }
.d1 { width: 115px; margin-left: 1px; }
.d2 { width: 67px; }
.d3 { width: 78px; background: #fff; color: #111; gap: 5px; padding-left: 8px; }
.d3 svg { margin-top: -5px; }

.status { height: 24px; flex: none; display: flex; align-items: center; background: linear-gradient(#c9c9c9, #f2f2f2); color: #111; }
.st-text { margin-left: 1px; width: 1200px; }
.st-cell { border-left: 2px solid #d0d0d0; height: 22px; line-height: 22px; }
.st-1 { width: 40px; padding-left: 8px; }
.st-2 { width: 38px; padding-left: 6px; }
```
